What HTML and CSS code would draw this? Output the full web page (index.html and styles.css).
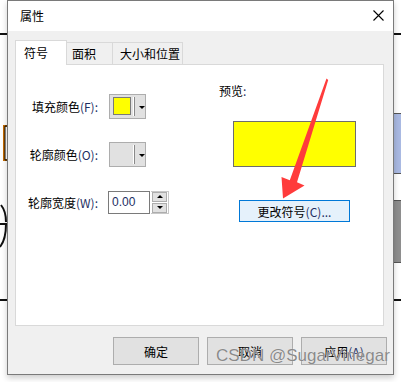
FILE: index.html
```html
<!DOCTYPE html>
<html lang="zh-CN">
<head>
    <meta charset="UTF-8">
    <meta name="viewport" content="width=device-width, initial-scale=1.0">
    <title>属性</title>
    <link rel="stylesheet" href="styles.css">
</head>
<body>
    <!-- 背后的窗口内容 -->
    <div class="desktop">
        <div class="rule rule-top"></div>
        <div class="rule rule-bottom"></div>
        <div class="side-block blue"></div>
        <div class="side-block grey"></div>
        <svg class="behind-glyphs" width="8" height="382" viewBox="0 0 8 382">
            <path d="M8 126 H4 V160 H8" fill="none" stroke="#c26a00" stroke-width="2"/>
            <path d="M8 126 H5 V160 H8" fill="none" stroke="#111" stroke-width="1"/>
            <path d="M1 205 C5 210 6 216 6 222 M0 224 H7 M6 224 C6 234 4 242 0 247" fill="none" stroke="#111" stroke-width="2"/>
        </svg>
    </div>

    <div class="dialog">
        <div class="titlebar">
            <span class="title">属性</span>
            <svg class="close" width="11" height="11" viewBox="0 0 11 11">
                <path d="M0.5 0.5 L10.5 10.5 M10.5 0.5 L0.5 10.5" stroke="#000" stroke-width="1.1"/>
            </svg>
        </div>
        <div class="dialog-body">
            <div class="tabs">
                <div class="tab active">符号</div>
                <div class="tab">面积</div>
                <div class="tab wide">大小和位置</div>
            </div>
            <div class="panel">
                <div class="form">
                    <div class="row">
                        <label class="label">填充颜色<span class="key">(F):</span></label>
                        <div class="picker">
                            <span class="swatch"></span>
                            <span class="divider"></span>
                            <span class="caret"></span>
                        </div>
                    </div>
                    <div class="row">
                        <label class="label">轮廓颜色<span class="key">(O):</span></label>
                        <div class="picker">
                            <span class="swatch empty"></span>
                            <span class="divider"></span>
                            <span class="caret"></span>
                        </div>
                    </div>
                    <div class="row">
                        <label class="label">轮廓宽度<span class="key">(W):</span></label>
                        <div class="spin">
                            <div class="spin-input">0.00</div>
                            <div class="spin-buttons">
                                <span class="spin-btn"><span class="tri up"></span></span>
                                <span class="spin-btn"><span class="tri down"></span></span>
                            </div>
                        </div>
                    </div>
                </div>
                <div class="preview">
                    <div class="preview-label">预览<span class="key">:</span></div>
                    <div class="preview-box"></div>
                    <button class="change-btn">更改符号<span class="key">(C)...</span></button>
                </div>
            </div>
            <div class="actions">
                <button class="btn">确定</button>
                <button class="btn">取消</button>
                <button class="btn">应用<span class="key">(A)</span></button>
            </div>
        </div>
    </div>

    <!-- 标注箭头 -->
    <svg class="arrow" width="401" height="382" viewBox="0 0 401 382">
        <polygon points="326.5,78.5 328.2,80 297,182.3 304.5,185.5 283,198.5 281.5,177 289.8,180.2" fill="#ff3b3b"/>
    </svg>

    <div class="watermark">CSDN @SugarVinegar</div>
</body>
</html>
```

FILE: styles.css
```css
body {
    margin: 0;
    width: 401px;
    height: 382px;
    overflow: hidden;
    position: relative;
    background: #fff;
    font-family: "Noto Sans CJK SC", "Microsoft YaHei", sans-serif;
    font-size: 12px;
    color: #000;
}

/* 背景 */
.rule {
    position: absolute;
    left: 0;
    width: 401px;
    height: 2px;
    background: #111;
}

.rule-top {
    top: 33px;
}

.rule-bottom {
    top: 299px;
}

.side-block {
    position: absolute;
    left: 393px;
    width: 8px;
    border-top: 1px solid #555;
    border-bottom: 1px solid #555;
}

.side-block.blue {
    top: 113px;
    height: 59px;
    background: #a9b9e2;
}

.side-block.grey {
    top: 200px;
    height: 61px;
    background: #8e8e8e;
}

.behind-glyphs {
    position: absolute;
    left: 0;
    top: 0;
}

/* 对话框 */
.dialog {
    position: absolute;
    left: 7px;
    top: 0;
    width: 385px;
    height: 373px;
    border: 1px solid #7a7a7a;
    background: #f0f0f0;
    box-shadow: 0 3px 6px rgba(0, 0, 0, 0.2);
    display: flex;
    flex-direction: column;
}

.titlebar {
    height: 30px;
    background: #fff;
    display: flex;
    align-items: center;
    justify-content: space-between;
    padding: 0 9px 0 12px;
}

.title {
    line-height: 16px;
}

.close {
    display: block;
    margin-top: -1px;
}

.dialog-body {
    flex: 1;
    padding: 9px 0 0 7px;
    display: flex;
    flex-direction: column;
}

.tabs {
    display: flex;
    align-items: flex-end;
    height: 24px;
}

.tab {
    box-sizing: border-box;
    height: 22px;
    width: 46px;
    padding-left: 5px;
    line-height: 21px;
    border: 1px solid #d9d9d9;
    border-bottom: none;
    border-left: none;
    background: #f0f0f0;
}

.tab.active {
    height: 25px;
    width: 52px;
    padding-left: 8px;
    line-height: 23px;
    border-left: 1px solid #d9d9d9;
    background: #fff;
    position: relative;
    z-index: 1;
    margin-bottom: -1px;
}

.tab.wide {
    width: 70px;
    padding-left: 7px;
}

.panel {
    box-sizing: border-box;
    width: 369px;
    height: 262px;
    border: 1px solid #d9d9d9;
    background: #fff;
    display: flex;
}

.key {
    color: #1d2f63;
}

/* 左侧表单 */
.form {
    width: 203px;
    padding-top: 17px;
}

.row {
    height: 48px;
    display: flex;
    align-items: center;
}

.label {
    width: 82px;
    text-align: right;
    margin-right: 10px;
    white-space: nowrap;
}

.picker {
    box-sizing: border-box;
    width: 37px;
    height: 25px;
    margin-left: 1px;
    border: 1px solid #adadad;
    background: #e1e1e1;
    display: flex;
    align-items: center;
    padding-left: 3px;
}

.swatch {
    box-sizing: border-box;
    width: 20px;
    height: 18px;
    background: #ffff00;
    border: 1px solid #7a7a7a;
}

.swatch.empty {
    background: transparent;
    border-color: transparent;
}

.divider {
    width: 1px;
    height: 19px;
    margin: 0 4px 0 3px;
    background: #8a8a8a;
    box-shadow: -1px 0 0 #fff;
}

.caret {
    width: 0;
    height: 0;
    margin-top: 2px;
    border-left: 3px solid transparent;
    border-right: 3px solid transparent;
    border-top: 3px solid #000;
}

.spin {
    display: flex;
    align-items: center;
}

.spin-input {
    box-sizing: border-box;
    width: 42px;
    height: 23px;
    border: 1px solid #7a7a7a;
    padding-left: 3px;
    line-height: 20px;
    font-family: "Liberation Sans", Arial, sans-serif;
    color: #1d2f63;
}

.spin-buttons {
    display: flex;
    flex-direction: column;
    gap: 1px;
    margin-left: 1px;
    padding: 0 1px;
    border: 1px solid #c8c8c8;
    border-left: none;
    height: 21px;
    justify-content: center;
}

.spin-btn {
    box-sizing: border-box;
    width: 15px;
    height: 10px;
    border: 1px solid #adadad;
    background: #e1e1e1;
    display: flex;
    align-items: center;
    justify-content: center;
}

.tri {
    width: 0;
    height: 0;
    border-left: 3px solid transparent;
    border-right: 3px solid transparent;
}

.tri.up {
    border-bottom: 3px solid #000;
}

.tri.down {
    border-top: 3px solid #000;
}

/* 右侧预览 */
.preview {
    padding-top: 18px;
    display: flex;
    flex-direction: column;
    align-items: flex-start;
}

.preview-label {
    line-height: 16px;
}

.preview-box {
    box-sizing: border-box;
    width: 123px;
    height: 46px;
    margin: 22px 0 0 14px;
    background: #ffff00;
    border: 1px solid #6d6d6d;
}

.change-btn {
    box-sizing: border-box;
    width: 111px;
    height: 22px;
    margin: 33px 0 0 20px;
    padding: 0;
    border: 1px solid #0078d7;
    background: #e5f1fb;
    font-family: inherit;
    font-size: 12px;
    color: #000;
}

/* 底部按钮 */
.actions {
    display: flex;
    justify-content: flex-end;
    gap: 8px;
    padding: 11px 6px 0 0;
}

.btn {
    box-sizing: border-box;
    width: 86px;
    height: 28px;
    padding: 0;
    border: 1px solid #adadad;
    background: #e1e1e1;
    font-family: inherit;
    font-size: 12px;
    color: #000;
}

/* 覆盖层 */
.arrow {
    position: absolute;
    left: 0;
    top: 0;
    pointer-events: none;
}

.watermark {
    position: absolute;
    left: 216px;
    top: 345px;
    font-family: "Liberation Sans", Arial, sans-serif;
    font-size: 17px;
    line-height: 21px;
    color: #8a8a8a;
    text-shadow: 0 0 1px rgba(255, 255, 255, 0.8);
    white-space: nowrap;
}
```
